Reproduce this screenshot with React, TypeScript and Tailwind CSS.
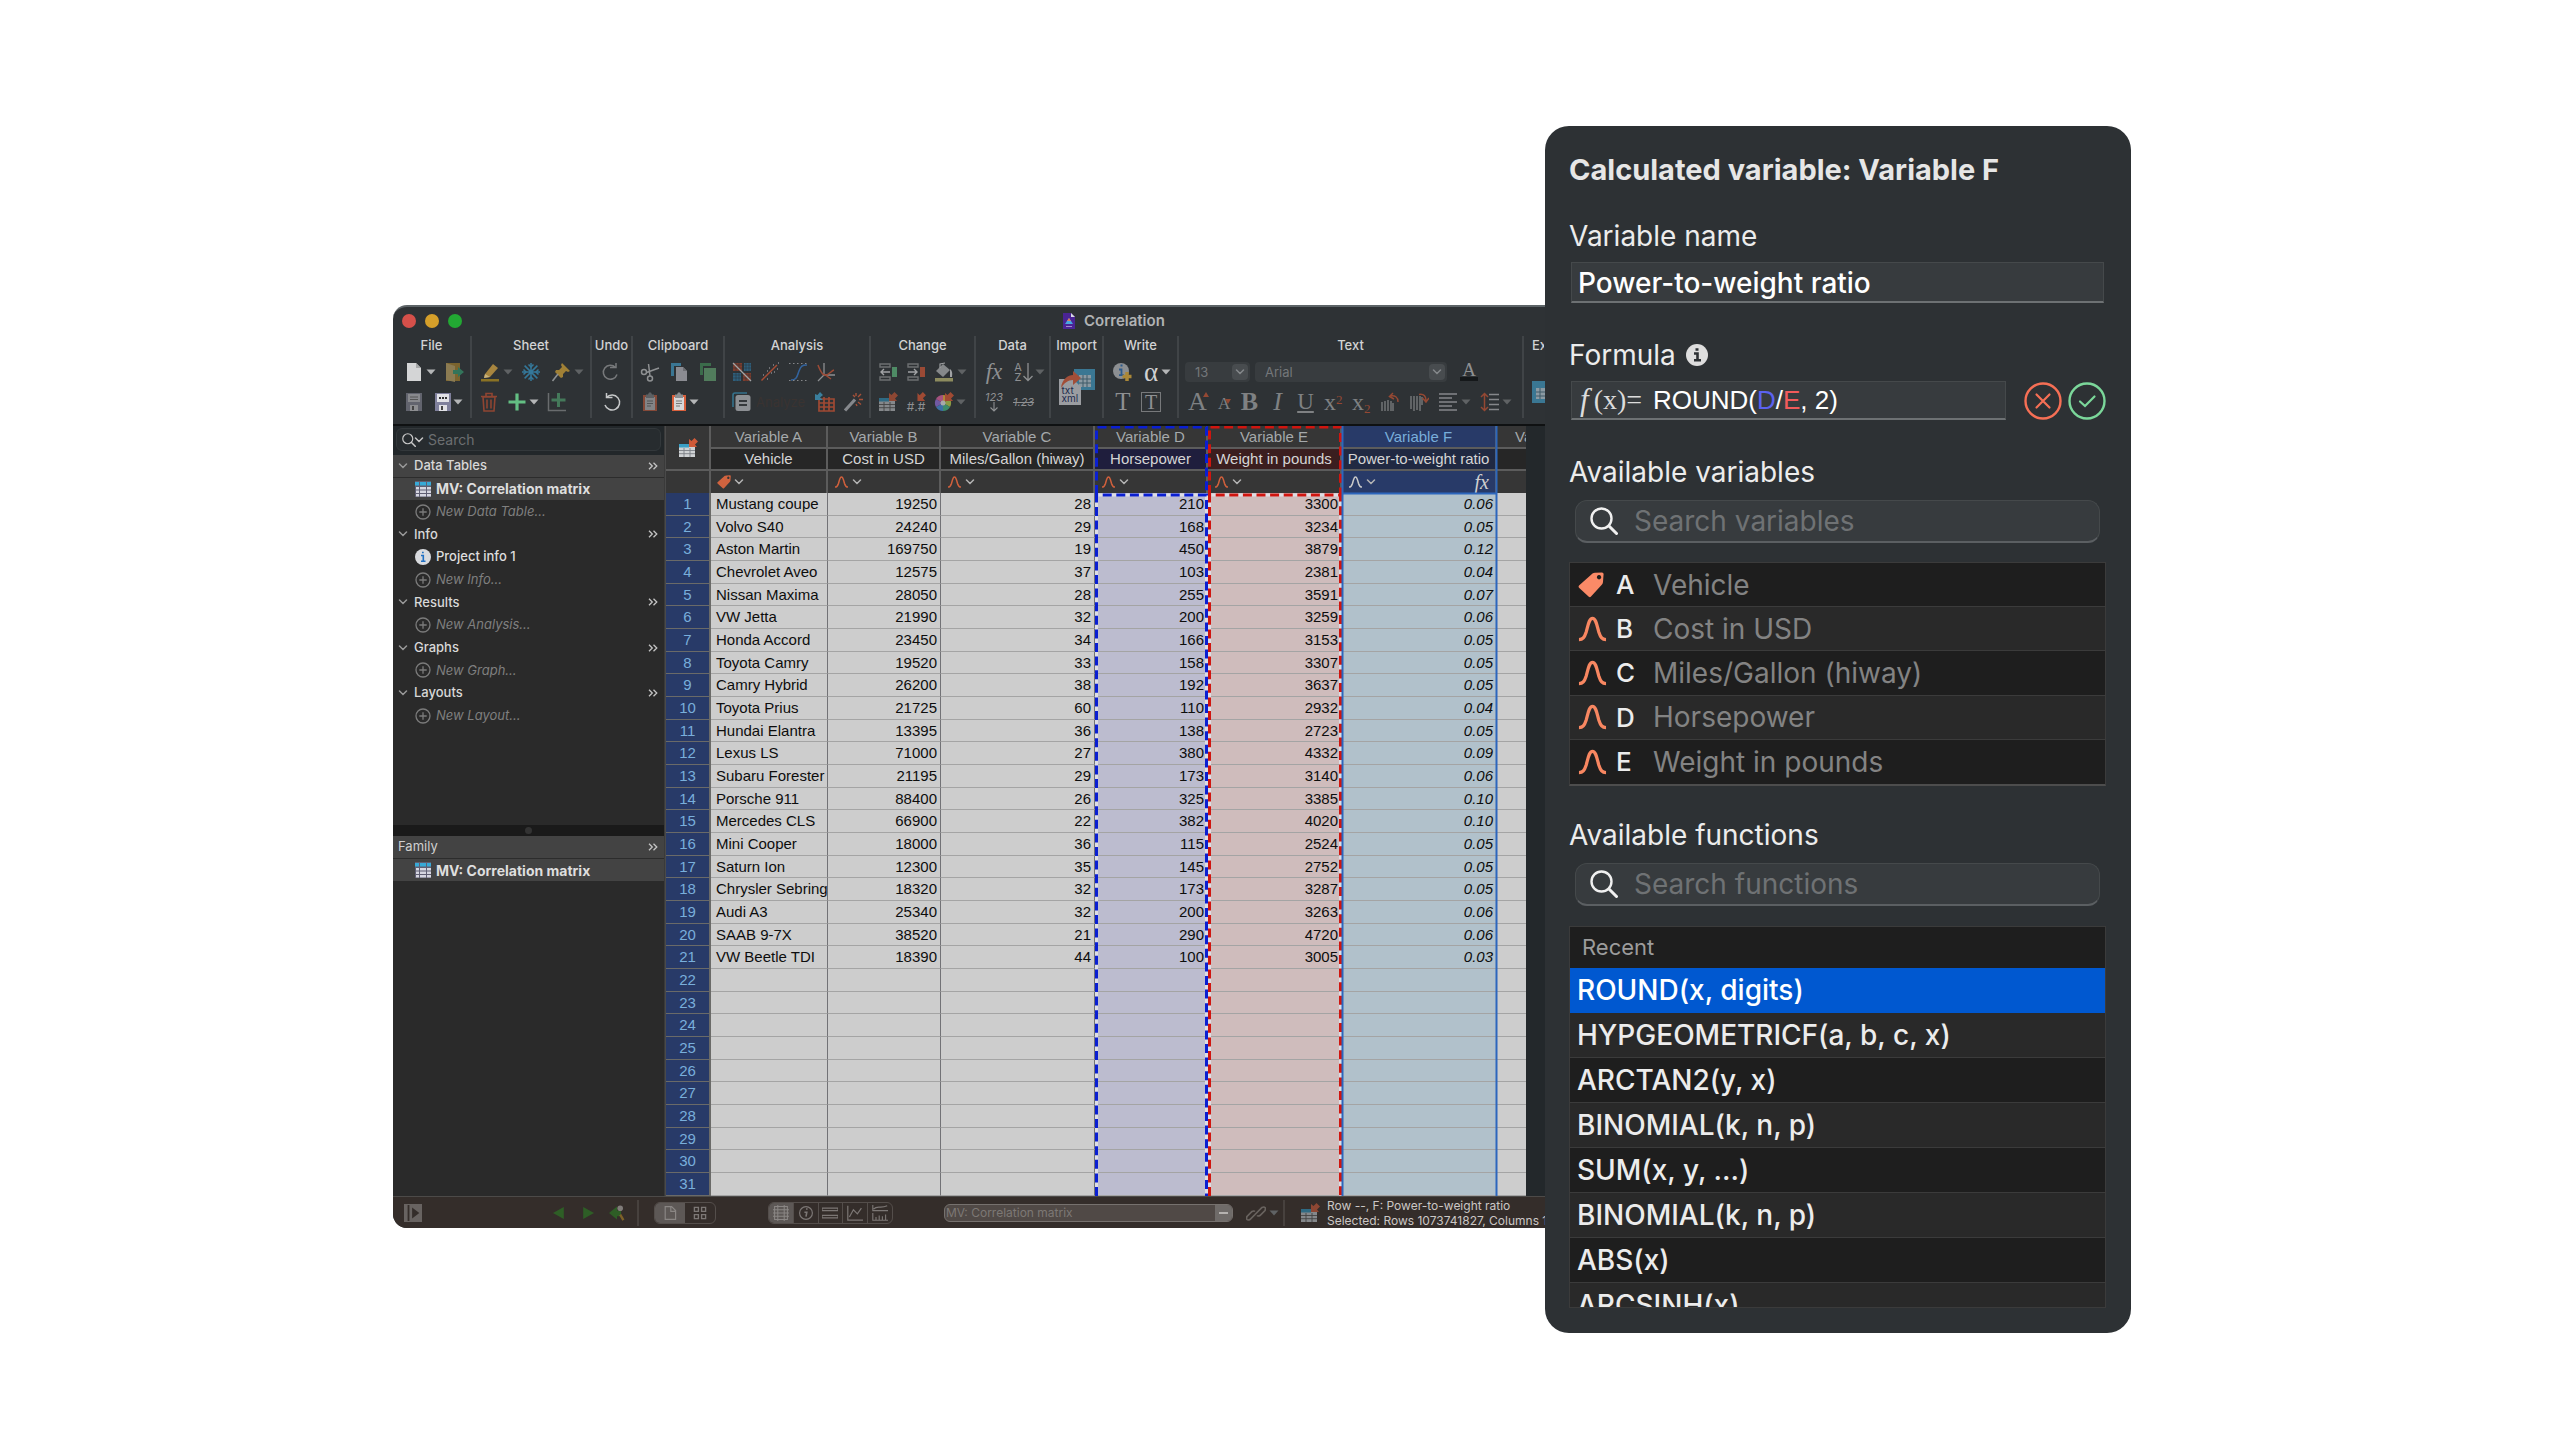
import type { ReactNode } from "react";

type Row = [string, number, number, number, number, string];

const rows: Row[] = [
  ["Mustang coupe", 19250, 28, 210, 3300, "0.06"],
  ["Volvo S40", 24240, 29, 168, 3234, "0.05"],
  ["Aston Martin", 169750, 19, 450, 3879, "0.12"],
  ["Chevrolet Aveo", 12575, 37, 103, 2381, "0.04"],
  ["Nissan Maxima", 28050, 28, 255, 3591, "0.07"],
  ["VW Jetta", 21990, 32, 200, 3259, "0.06"],
  ["Honda Accord", 23450, 34, 166, 3153, "0.05"],
  ["Toyota Camry", 19520, 33, 158, 3307, "0.05"],
  ["Camry Hybrid", 26200, 38, 192, 3637, "0.05"],
  ["Toyota Prius", 21725, 60, 110, 2932, "0.04"],
  ["Hundai Elantra", 13395, 36, 138, 2723, "0.05"],
  ["Lexus LS", 71000, 27, 380, 4332, "0.09"],
  ["Subaru Forester", 21195, 29, 173, 3140, "0.06"],
  ["Porsche 911", 88400, 26, 325, 3385, "0.10"],
  ["Mercedes CLS", 66900, 22, 382, 4020, "0.10"],
  ["Mini Cooper", 18000, 36, 115, 2524, "0.05"],
  ["Saturn Ion", 12300, 35, 145, 2752, "0.05"],
  ["Chrysler Sebring", 18320, 32, 173, 3287, "0.05"],
  ["Audi A3", 25340, 32, 200, 3263, "0.06"],
  ["SAAB 9-7X", 38520, 21, 290, 4720, "0.06"],
  ["VW Beetle TDI", 18390, 44, 100, 3005, "0.03"],
];

const rowNumbers = Array.from({ length: 31 }, (_, i) => i + 1);

const columns = [
  { id: "Variable A", name: "Vehicle", head: "bg-[#363636] text-[#a5a9ab]", title: "bg-[#262626]", body: "bg-[#cdcdcd]" },
  { id: "Variable B", name: "Cost in USD", head: "bg-[#363636] text-[#a5a9ab]", title: "bg-[#262626]", body: "bg-[#cdcdcd]" },
  { id: "Variable C", name: "Miles/Gallon (hiway)", head: "bg-[#363636] text-[#a5a9ab]", title: "bg-[#262626]", body: "bg-[#cdcdcd]" },
  { id: "Variable D", name: "Horsepower", head: "bg-[#363636] text-[#a5a9ab]", title: "bg-[#1f1e3d]", body: "bg-[#bcbccf]" },
  { id: "Variable E", name: "Weight in pounds", head: "bg-[#363636] text-[#a5a9ab]", title: "bg-[#3b1e1f]", body: "bg-[#cfbcbc]" },
  { id: "Variable F", name: "Power-to-weight ratio", head: "bg-[#283a68] text-[#79aedb]", title: "bg-[#202942]", body: "bg-[#b1c1cb]" },
];

/* ---------- small drawings ---------- */

function Icon({ children, className = "size-5" }: { children: ReactNode; className?: string }) {
  return (
    <svg className={`shrink-0 ${className}`} viewBox="0 0 20 20" fill="none" aria-hidden="true">
      {children}
    </svg>
  );
}

function Caret({ dim }: { dim?: boolean }) {
  return (
    <svg className="w-[10px] h-[6px] shrink-0" viewBox="0 0 10 6" aria-hidden="true">
      <path d="M0.5 0.5h9L5 5.5z" fill={dim ? "#5f6264" : "#b4b6b7"} />
    </svg>
  );
}

function Chevron({ className = "text-[#b0b0b0]" }: { className?: string }) {
  return (
    <svg className={`w-[10px] h-[6px] shrink-0 ${className}`} viewBox="0 0 10 6" fill="none" aria-hidden="true">
      <path d="M1.5 1L5 4.5 8.5 1" stroke="currentColor" strokeWidth="1.5" strokeLinecap="round" />
    </svg>
  );
}

function More() {
  return (
    <svg className="w-[10px] h-2 shrink-0" viewBox="0 0 10 8" fill="none" stroke="#c4c4c4" strokeWidth="1.300" aria-hidden="true">
      <path d="M1 0.700L4.300 4 1 7.300M5.500 0.700L8.800 4 5.500 7.300" />
    </svg>
  );
}

function Curve({ className }: { className: string }) {
  return (
    <svg className={`shrink-0 ${className}`} viewBox="0 0 30 26" fill="none" aria-hidden="true">
      <path
        d="M1 24c4 0 5.500-2 7.500-8C10.500 9 11.500 2 15 2s4.500 7 6.500 14c2 6 3.500 8 7.500 8"
        stroke="currentColor"
        strokeWidth="3.400"
      />
    </svg>
  );
}

function Tag({ className }: { className: string }) {
  return (
    <svg className={`shrink-0 ${className}`} viewBox="0 0 26 26" aria-hidden="true">
      <path
        d="M14.500 1.500Q15.500 0.800 17 0.700L24 0.500q1.500 0 1.600 1.500L25 10q-0.200 1.500-1 2.500L13 24.500q-1 1.200-2.200 0.200L1 15.800q-1-1 0-2.200zM21 3a2.200 2.200 0 1 0 0.100 0z"
        fill="currentColor"
        fillRule="evenodd"
      />
    </svg>
  );
}

function TableIcon({ className = "size-4" }: { className?: string }) {
  return (
    <svg className={`shrink-0 ${className}`} viewBox="0 0 16 16" aria-hidden="true">
      <path d="M0 0h16v16H0z" fill="#5f5e72" />
      <path d="M0 1h4v3.500H0zM5 1h6v3.500H5zM12 1h4v3.500h-4z" fill="#37a9d6" />
      <path d="M1 6h3v2.500H1zM5 6h6v2.500H5zM12 6h4v2.500h-4zM1 9.500h3V12H1zM5 9.500h6V12H5zM12 9.500h4V12h-4zM1 13h3v2.500H1zM5 13h6v2.500H5zM12 13h4v2.500h-4z" fill="#d6d6e0" />
    </svg>
  );
}

// Table with an orange arrow pointing into its corner
function TableArrow({ className = "size-5", dim }: { className?: string; dim?: boolean }) {
  return (
    <Icon className={className}>
      <path d="M1 6h16v13H1z" fill={dim ? "#85888b" : "#cfd2d4"} />
      <path d="M1 6h10v3.500H1z" fill={dim ? "#2f6a83" : "#3b9fc4"} />
      <path d="M1 12.500h16M1 15.700h16M6 10v9M12 10v9" stroke={dim ? "#444" : "#7c7f86"} strokeWidth="0.900" />
      <path d="M11 1l2.500 2L16.500 0 20 3.500 17 6.500 19 9h-8z" fill={dim ? "#8d4733" : "#d05a38"} />
    </Icon>
  );
}

function PlusCircle() {
  return (
    <svg className="size-4 shrink-0" viewBox="0 0 16 16" fill="none" stroke="#7b7b7b" aria-hidden="true">
      <circle cx="8" cy="8" r="7" strokeWidth="1.300" />
      <path d="M8 4.300v7.400M4.300 8h7.400" strokeWidth="1.300" />
    </svg>
  );
}

function Magnifier({ className }: { className: string }) {
  return (
    <svg className={`shrink-0 ${className}`} viewBox="0 0 28 28" fill="none" stroke="currentColor" aria-hidden="true">
      <circle cx="11.500" cy="11.500" r="10" strokeWidth="2.400" />
      <path d="M19 19l7.500 7.500" strokeWidth="3" strokeLinecap="round" />
    </svg>
  );
}

/* ---------- toolbar ---------- */

function Tool({ label, children }: { label: string; children: ReactNode }) {
  return (
    <button type="button" aria-label={label} className="flex items-center shrink-0">
      {children}
    </button>
  );
}

function Group({ title, className, children }: { title: string; className: string; children: ReactNode }) {
  return (
    <section className={`shrink-0 h-[82px] border-r-2 border-[#404447] ${className}`}>
      <h2 className="mb-2 text-[13px] leading-[18px] font-medium text-center text-[#d2d3d4]">{title}</h2>
      {children}
    </section>
  );
}

function ToolRow({ className = "", children }: { className?: string; children: ReactNode }) {
  return <div className={`flex items-center h-5 mb-[10px] ${className}`}>{children}</div>;
}

function Clip({ dim }: { dim?: boolean }) {
  return (
    <Icon>
      <g opacity={dim ? 0.5 : 1}>
        <path d="M3 3h14v16H3z" fill="#d9603c" />
        <path d="M5 5h10v13H5z" fill="#d5d6d8" />
        <path d="M6 4V2.500h2L9 0.500h2l1 2h2V6H6z" fill="#8b8e91" />
        <path d="M7 9h6M7 11.500h6M7 14h4" stroke="#777" />
      </g>
    </Icon>
  );
}

function Toolbar() {
  return (
    <div className="flex mt-[7px] h-[90px] border-b-2 border-[#0f1112] overflow-hidden">
      <Group title="File" className="w-[79px]">
        <ToolRow className="pl-[11px]">
          <Tool label="New">
            <Icon><path d="M3 1h9l5 5v13H3z" fill="#d4d5d6" /><path d="M12 1v5h5" fill="#a5a7a8" /></Icon>
            <span className="w-[2px]" />
            <Caret />
          </Tool>
          <span className="w-2" />
          <Tool label="Open">
            <Icon>
              <path d="M2 1h14v18H2z" fill="#7b642e" />
              <path d="M2 1l9 3v16l-9-2z" fill="#8b7b52" />
              <path d="M9 8h5V5l6 5-6 5v-3H9z" fill="#33745a" />
            </Icon>
          </Tool>
        </ToolRow>
        <ToolRow className="pl-[11px]">
          <Tool label="Save">
            <Icon><path d="M2 1h16v18H2z" fill="#62646e" /><path d="M4 2h12v8H4z" fill="#88898d" /><path d="M6 5h8M6 7.500h8" stroke="#555" /><path d="M6 13h8v6H6z" fill="#8d8e91" /><path d="M8 14h2v4H8z" fill="#444" /></Icon>
          </Tool>
          <span className="w-[9px]" />
          <Tool label="Save as">
            <Icon><path d="M2 1h16v18H2z" fill="#7f809c" /><path d="M4 2h12v8H4z" fill="#e1e1e6" /><path d="M6 6h2M9 6h2M12 6h2" stroke="#333" strokeWidth="2" /><path d="M6 13h8v6H6z" fill="#e1e1e6" /><path d="M8 14h2v4H8z" fill="#444" /></Icon>
            <Caret />
          </Tool>
        </ToolRow>
      </Group>

      <Group title="Sheet" className="w-[120px]">
        <ToolRow className="pl-2">
          <Tool label="Highlight">
            <Icon><path d="M5 12L13 2l5 4-8 9-6 1z" fill="#a7853f" /><path d="M5 12l5 3-6 1z" fill="#c9b27a" /><path d="M1 17h18v2.500H1z" fill="#8a7224" /></Icon>
            <span className="w-[3px]" />
            <Caret dim />
          </Tool>
          <span className="w-2" />
          <Tool label="Freeze">
            <Icon>
              <g stroke="#34789a" strokeWidth="1.500">
                <path d="M10 1v18M1 10h18M3.600 3.600l12.800 12.800M16.400 3.600L3.600 16.400" />
                <path d="M7.500 2.500L10 5l2.500-2.500M7.500 17.500L10 15l2.500 2.500M2.500 7.500L5 10l-2.500 2.500M17.500 7.500L15 10l2.500 2.500" />
              </g>
            </Icon>
          </Tool>
          <span className="w-[10px]" />
          <Tool label="Pin">
            <Icon><path d="M11 1l8 8-2 1-2-1-3 3v3l-2 1-6-6 1-2h3l3-3-1-2z" fill="#a08035" /><path d="M7 12l-5.500 7" stroke="#8d9092" strokeWidth="1.600" /></Icon>
            <span className="w-[3px]" />
            <Caret dim />
          </Tool>
        </ToolRow>
        <ToolRow className="pl-[7px]">
          <Tool label="Delete">
            <Icon><path d="M4 5h12l-1 14H5zM2 4.500h16M7 4V1.500h6V4M8 7.500v9M12 7.500v9" stroke="#8f4532" strokeWidth="1.600" /></Icon>
          </Tool>
          <span className="w-2" />
          <Tool label="Add">
            <Icon><path d="M10 1.500v17M1.500 10h17" stroke="#63bf83" strokeWidth="3.200" /></Icon>
            <span className="w-[2px]" />
            <Caret />
          </Tool>
          <span className="w-2" />
          <Tool label="Add graph">
            <Icon><path d="M1.500 1v17.500H19" stroke="#696c6e" strokeWidth="1.500" /><path d="M11.500 1v14M4.500 8h14" stroke="#44795a" strokeWidth="3" /></Icon>
          </Tool>
        </ToolRow>
      </Group>

      <Group title="Undo" className="w-[41px]">
        <ToolRow className="justify-center pr-1">
          <Tool label="Redo">
            <Icon><path d="M15.500 5.500A7 7 0 1 0 17 12.500M10 5.500h6V1" stroke="#77797b" strokeWidth="1.500" /></Icon>
          </Tool>
        </ToolRow>
        <ToolRow className="justify-center">
          <Tool label="Undo">
            <Icon><path d="M4.500 5.500A7.500 7.500 0 1 1 3 13M10.500 5.500h-6V1" stroke="#c6c8c9" strokeWidth="1.500" /></Icon>
          </Tool>
        </ToolRow>
      </Group>

      <Group title="Clipboard" className="w-[92px]">
        <ToolRow className="pl-[7px] gap-[9px]">
          <Tool label="Cut">
            <Icon>
              <g stroke="#8e9092" strokeWidth="1.500"><circle cx="4" cy="10" r="2.500" /><circle cx="10" cy="16.500" r="2.500" /><path d="M6.500 10.500L19 6M10 14L8.500 2" /></g>
            </Icon>
          </Tool>
          <Tool label="Copy">
            <Icon><path d="M2 1h10v3H5v10H2z" fill="#3a7693" /><path d="M7 5h7l4 4v10H7z" fill="#8b8c92" /><path d="M14 5v4h4" fill="#6d6e73" /></Icon>
          </Tool>
          <Tool label="Duplicate">
            <Icon><path d="M2 1h11v3H5v9H2z" fill="#3b6c4b" /><path d="M6 6h12v13H6z" fill="#517c5c" /></Icon>
          </Tool>
        </ToolRow>
        <ToolRow className="pl-[7px] gap-[9px]">
          <Tool label="Paste"><Clip dim /></Tool>
          <Tool label="Paste special">
            <Clip />
            <Caret />
          </Tool>
        </ToolRow>
      </Group>

      <Group title="Analysis" className="w-[146px]">
        <ToolRow className="pl-[7px] gap-2">
          <Tool label="Correlation matrix">
            <Icon>
              <path d="M1 1h9v8H1zM11 11h8v8h-8z" fill="#7e3d2d" />
              <path d="M12 1h7v8h-7zM1 11h8v8H1z" fill="#2e5f7c" />
              <path d="M1 3h18M1 6h18M1 13h18M1 16h18M4 1v18M7 1v18M14 1v18M17 1v18" stroke="#2e3235" strokeWidth="0.500" />
              <path d="M1 1l18 18" stroke="#a3a4a5" strokeWidth="1.300" />
            </Icon>
          </Tool>
          <Tool label="Linear regression">
            <Icon><path d="M1.500 18.500L17 3" stroke="#a84c35" strokeWidth="1.500" /><path d="M3 13h1M7 9h1M11 11h1M13 3h1M17 7h1M18 1h1M7 17h1M14 10h1M9 6h1" stroke="#85878a" strokeWidth="1.300" /></Icon>
          </Tool>
          <Tool label="Nonlinear regression">
            <Icon><path d="M3 18c6 0 6-4 8-9s3-6 8-6" stroke="#33639c" strokeWidth="1.600" /><path d="M1 1.500h18M1 18.500h18" stroke="#85878a" strokeWidth="1.200" strokeDasharray="1.500 2.500" /></Icon>
          </Tool>
          <Tool label="Fit">
            <Icon><path d="M8 1v12l-6 6M8 13h11" stroke="#8d8f91" strokeWidth="1.300" /><path d="M2 3c2 5 3 8 6 10s7-4 10-5M8 12l7 5" stroke="#9c4a35" strokeWidth="1.500" /></Icon>
          </Tool>
        </ToolRow>
        <ToolRow className="pl-[7px] gap-2">
          <Tool label="Analyze">
            <Icon><path d="M1 15V3q0-2 2-2h12" stroke="#35728c" strokeWidth="1.600" /><rect x="3.500" y="3" width="15" height="16" rx="2.500" fill="#8d9094" /><path d="M7 9h8M7 13h8" stroke="#35383b" strokeWidth="1.800" /></Icon>
            <span className="pl-1 w-[55px] text-[13px] leading-4 text-left text-[#3a3331]">Analyze</span>
          </Tool>
          <Tool label="Table to graph">
            <Icon><path d="M4 7h15v12H4zM4 11h15M4 15h15M9 5v14M14 5v14" stroke="#a04a33" strokeWidth="1.700" /><path d="M0 2l2.500 1L5 0l3 3-3 2.500L8 8H0z" fill="#3a7f9d" /></Icon>
          </Tool>
          <Tool label="Wizard">
            <Icon><path d="M2 18.500L12 7.500" stroke="#85888c" strokeWidth="3.200" /><path d="M13 1v3M10 3l2 2M18 2l-3 3M16 7.500h4M15 10l3 2.500M13 12l1 2" stroke="#a65138" strokeWidth="1.400" /></Icon>
          </Tool>
        </ToolRow>
      </Group>

      <Group title="Change" className="w-[105px]">
        <ToolRow className="pl-[7px] gap-2">
          <Tool label="Insert">
            <Icon><path d="M2 2h10v3H2zM2 15h10v3H2z" stroke="#6d7072" strokeWidth="1.400" /><path d="M3 10h9M6 7l-3 3 3 3" stroke="#a1a3a5" strokeWidth="1.400" /><path d="M14 5h5v10h-5z" fill="#4e8b65" /></Icon>
          </Tool>
          <Tool label="Remove">
            <Icon><path d="M2 2h10v3H2zM2 15h10v3H2z" stroke="#6d7072" strokeWidth="1.400" /><path d="M2 10h9M8 7l3 3-3 3" stroke="#a1a3a5" strokeWidth="1.400" /><path d="M14 5h5v10h-5z" fill="#9b4a35" /></Icon>
          </Tool>
          <Tool label="Fill">
            <Icon><path d="M2 9l7-7 7 6-7 7z" fill="#85888a" /><path d="M6 6V2l5-1" stroke="#9c9ea0" strokeWidth="1.200" /><path d="M16 7q3 2 2 8h-2z" fill="#a1a3a5" /><path d="M1 16h18v3.500H1z" fill="#8d8c5f" /></Icon>
            <span className="w-[3px]" />
            <Caret dim />
          </Tool>
        </ToolRow>
        <ToolRow className="pl-[7px] gap-2">
          <Tool label="Change table"><TableArrow dim /></Tool>
          <Tool label="Number format">
            <span className="relative w-5 h-5 text-[12px] leading-[10px] text-[#8e9092] pt-[10px]">
              #.#
              <Icon className="absolute right-0 top-0 size-[9px]"><path d="M1 2l5 5 7-7 7 7-7 7 5 6H1z" fill="#a04a33" /></Icon>
            </span>
          </Tool>
          <Tool label="Color scheme">
            <Icon>
              <path d="M9 11V3a8 8 0 0 1 7 4z" fill="#b0863a" /><path d="M9 11l7-4a8 8 0 0 1 0 8z" fill="#8b9b45" /><path d="M9 11l7 4a8 8 0 0 1-7 4z" fill="#3d8b6b" />
              <path d="M9 11v8a8 8 0 0 1-7-4z" fill="#3c6fa5" /><path d="M9 11l-7 4a8 8 0 0 1 0-8z" fill="#7059a3" /><path d="M9 11L2 7a8 8 0 0 1 7-4z" fill="#a5527e" />
              <circle cx="9" cy="11" r="2.500" fill="#a7a9ab" /><path d="M11 1l2.500 2L16.500 0 20 3.500 17 6.500 19 9h-8z" fill="#a04a33" />
            </Icon>
            <span className="w-[2px]" />
            <Caret dim />
          </Tool>
        </ToolRow>
      </Group>

      <Group title="Data" className="w-[75px]">
        <ToolRow className="pl-2 gap-[9px]">
          <Tool label="Function"><span className="w-5 font-['Liberation_Serif',serif] italic text-[23px] leading-5 text-[#8e9092]">fx</span></Tool>
          <Tool label="Sort">
            <span className="w-[10px] text-[11px] leading-[10px] text-[#8e9092]">A<br />Z</span>
            <Icon className="w-[10px] h-5"><path d="M10 -8v34M1 18l9 9 9-9" stroke="#8e9092" strokeWidth="2.600" /></Icon>
            <span className="w-[2px]" />
            <Caret dim />
          </Tool>
        </ToolRow>
        <ToolRow className="pl-2 gap-[9px]">
          <Tool label="Number rows">
            <span className="w-5 text-[11px] leading-[9px] italic text-[#8e9092]">
              123
              <Icon className="w-5 h-[10px]"><path d="M10 0v18M3 11l7 7 7-7" stroke="#8e9092" strokeWidth="2.200" /></Icon>
            </span>
          </Tool>
          <Tool label="Exclude"><span className="w-5 text-[11px] leading-4 italic line-through text-[#8e9092]">1.23</span></Tool>
        </ToolRow>
      </Group>

      <Group title="Import" className="w-[53px]">
        <div className="flex justify-center pt-[6px]">
          <button type="button" aria-label="Import text or XML" className="relative w-9 h-[38px]">
            <svg className="absolute inset-0" viewBox="0 0 36 38" fill="none" aria-hidden="true">
              <path d="M15 1h21v21H15z" fill="#3a7793" />
              <path d="M20 7h12v12H20z" fill="#8b9aa3" /><path d="M20 11h12M20 15h12M24 7v12M28 7v12" stroke="#3f5a68" />
              <path d="M0 11h14l8 8v18H0z" fill="#9b9da1" />
              <path d="M2 20c1-9 7-13 12-13V3l8 7-8 7v-5c-5 0-9 3-12 8z" fill="#a24e38" />
            </svg>
            <span className="absolute left-[3px] top-[18px] text-[10px] leading-[8px] text-left text-[#1d2a4d]">txt<br />xml</span>
          </button>
        </div>
      </Group>

      <Group title="Write" className="w-[75px]">
        <ToolRow className="pl-2 gap-[9px]">
          <Tool label="Add info">
            <Icon><circle cx="9" cy="9" r="8" fill="#8c8f92" /><path d="M7 7.500h2.500V13M7 13.200h5M8.500 3.500h2" stroke="#2c5b8d" strokeWidth="1.800" /><path d="M15 10v9M10.500 14.500h9" stroke="#ab8838" strokeWidth="3.500" /></Icon>
          </Tool>
          <Tool label="Symbol">
            <span className="w-5 text-[27px] leading-5 font-['Liberation_Serif',serif] text-[#d0d1d2]">α</span>
            <Caret />
          </Tool>
        </ToolRow>
        <ToolRow className="pl-[9px] gap-2">
          <Tool label="Text"><span className="w-5 font-['Liberation_Serif',serif] text-[25px] leading-5 text-[#8e9092]">T</span></Tool>
          <Tool label="Text box"><span className="w-5 h-5 border border-[#77797b] font-['Liberation_Serif',serif] text-[20px] leading-[18px] text-center text-[#8e9092]">T</span></Tool>
        </ToolRow>
      </Group>

      <Group title="Text" className="w-[345px]">
        <ToolRow className="pl-[6px] gap-[5px]">
          <DimSelect label="Font size" value="13" className="w-[65px]" />
          <DimSelect label="Font" value="Arial" className="w-[192px]" />
          <span className="w-[3px]" />
          <Tool label="Text color">
            <span className="w-[18px] h-[18px] border-b-4 border-[#15181a] font-['Liberation_Serif',serif] text-[19px] leading-[13px] text-center text-[#8e9092]">A</span>
          </Tool>
        </ToolRow>
        <ToolRow className="pl-[9px] gap-[9px] font-['Liberation_Serif',serif] text-[#7f8183]">
          <Tool label="Larger"><span className="w-[19px] text-[26px] leading-5">A</span><Tri up /></Tool>
          <Tool label="Smaller"><span className="w-[11px] text-[17px] leading-5 pt-1">A</span><Tri /></Tool>
          <Tool label="Bold"><span className="w-[19px] text-[26px] leading-5 font-bold text-center">B</span></Tool>
          <Tool label="Italic"><span className="w-[19px] text-[26px] leading-5 italic text-center">I</span></Tool>
          <Tool label="Underline"><span className="w-[19px] text-[23px] leading-5 underline text-center">U</span></Tool>
          <Tool label="Superscript"><span className="w-[19px] text-[24px] leading-5 text-left">x<sup className="text-[13px] text-[#944833]">2</sup></span></Tool>
          <Tool label="Subscript"><span className="w-[19px] text-[24px] leading-5 text-left">x<sub className="text-[13px] text-[#944833]">2</sub></span></Tool>
          <Tool label="Rotate left"><Icon><path d="M2 10v9M5 9v10M8 8v11M11 9v10M13 11v8" stroke="#77797b" strokeWidth="1.400" /><path d="M18 10c0-5-3-7-8-6M13 1L9.500 4.500 14 7" stroke="#944833" strokeWidth="1.500" /></Icon></Tool>
          <Tool label="Rotate right"><Icon><path d="M2 4v13M5 4v15M8 4v14M11 4v15M13 5v8" stroke="#77797b" strokeWidth="1.400" /><path d="M10 2.500c5-1 7 2 7 6M13.500 6l3.500 4 3-4" stroke="#944833" strokeWidth="1.500" /></Icon></Tool>
          <Tool label="Align">
            <Icon><path d="M1 2h18M1 6h13M1 10h18M1 14h13M1 18h18" stroke="#85878a" strokeWidth="1.500" /></Icon>
            <span className="w-[3px]" /><Caret dim />
          </Tool>
          <Tool label="Line spacing">
            <Icon><path d="M9 2.500h10M9 7.500h10M9 12.500h10M9 17.500h10" stroke="#85878a" strokeWidth="1.500" /><path d="M4.500 2v16M1 5l3.500-3.500L8 5M1 15l3.500 3.500L8 15" stroke="#944833" strokeWidth="1.500" /></Icon>
            <span className="w-[2px]" /><Caret dim />
          </Tool>
        </ToolRow>
      </Group>

      <section className="flex-1 overflow-hidden pl-2">
        <h2 className="text-[13px] leading-[18px] font-medium text-[#d2d3d4] w-[12px] overflow-hidden">Export</h2>
        <svg className="w-[22px] h-[22px] mt-[27px]" viewBox="0 0 22 22" aria-hidden="true">
          <path d="M0 0h22v22H0z" fill="#3a7793" /><path d="M4 7h12v11H4z" fill="#8b9aa3" /><path d="M4 11h12M4 15h12M8 7v11" stroke="#3f5a68" />
        </svg>
      </section>
    </div>
  );
}

function Tri({ up }: { up?: boolean }) {
  return (
    <svg className="w-[6px] h-5 -ml-1" viewBox="0 0 6 20" aria-hidden="true">
      <path d={up ? "M0 5h6L3 0z" : "M0 7h6l-3 5z"} fill="#944833" />
    </svg>
  );
}

function DimSelect({ label, value, className }: { label: string; value: string; className: string }) {
  return (
    <div className={`relative h-5 rounded bg-[#383c3f] ${className}`}>
      <select aria-label={label} className="appearance-none block w-full h-5 pl-[10px] text-[13px] leading-5 text-[#74777a]">
        <option>{value}</option>
      </select>
      <span className="absolute right-[2px] top-[2px] flex items-center justify-center size-4 rounded-sm bg-[#484c4f] pointer-events-none">
        <Chevron className="text-[#85888b]" />
      </span>
    </div>
  );
}

/* ---------- sidebar ---------- */

function SectionRow({ title, filled }: { title: string; filled?: boolean }) {
  return (
    <li className={`flex items-center pl-[5px] pr-[6px] text-[#d8d8d8] ${filled ? "bg-[#434343] border-b border-[#2c2c2c]" : ""}`}>
      <Chevron className="text-[#999]" />
      <span className="pl-[6px] flex-1 font-medium">{title}</span>
      <More />
    </li>
  );
}

function NewRow({ title }: { title: string }) {
  return (
    <li className="flex items-center pl-[22px] gap-[5px] italic text-[#7f7f7f]">
      <PlusCircle />
      <a href="#">{title}</a>
    </li>
  );
}

function Sidebar() {
  return (
    <aside className="w-[272px] shrink-0 flex flex-col bg-[#2a2a2a] text-[13px] border-r border-[#3a3a3a]">
      <div className="h-[29px] px-[3px] pt-[2px] bg-[#22272a]">
        <label className="flex items-center h-[23px] pl-[5px] rounded-md bg-[#272c2f] border border-[#33383b] text-[#c8c8c8]">
          <Magnifier className="size-[14px]" />
          <Chevron className="text-[#c8c8c8] -ml-[2px]" />
          <input aria-label="Search" placeholder="Search" className="ml-[4px] w-full text-[14px] outline-none placeholder:text-[#6c6f71]" />
        </label>
      </div>
      <ul className="grid grid-rows-12 h-[272px]">
        <SectionRow title="Data Tables" filled />
        <li className="flex items-center pl-[22px] gap-[5px] bg-[#434343] text-[14px] font-bold text-[#dedede]">
          <TableIcon />
          MV: Correlation matrix
        </li>
        <NewRow title="New Data Table..." />
        <SectionRow title="Info" />
        <li className="flex items-center pl-[22px] gap-[5px] font-medium text-[#dedede]">
          <svg className="size-4" viewBox="0 0 16 16" fill="none" aria-hidden="true">
            <circle cx="8" cy="8" r="8" fill="#d8dade" />
            <path d="M6 6.500h2.300V12M6 12.200h4.500M7 3.500h1.700" stroke="#1f6fc2" strokeWidth="1.600" />
          </svg>
          Project info 1
        </li>
        <NewRow title="New Info..." />
        <SectionRow title="Results" />
        <NewRow title="New Analysis..." />
        <SectionRow title="Graphs" />
        <NewRow title="New Graph..." />
        <SectionRow title="Layouts" />
        <NewRow title="New Layout..." />
      </ul>
      <div className="mt-[98px] h-[11px] bg-[#1a1a1a] flex items-center justify-center">
        <span className="size-[7px] rounded-full bg-[#333]" />
      </div>
      <div className="flex items-center h-[23px] pl-[5px] pr-[6px] bg-[#434343] border-b border-[#2c2c2c] text-[#d0d0d0]">
        <span className="flex-1">Family</span>
        <More />
      </div>
      <div className="flex items-center h-[22px] pl-[22px] gap-[5px] bg-[#434343] text-[14px] font-bold text-[#dedede]">
        <TableIcon />
        MV: Correlation matrix
      </div>
    </aside>
  );
}

/* ---------- data grid ---------- */

function DataGrid() {
  return (
    <div className="relative w-[860px] shrink-0 font-['Liberation_Sans',sans-serif] text-[15px] leading-[20px]">
      <table className="table-fixed border-separate border-spacing-0 w-[860px] h-[770px] whitespace-nowrap text-[#0d0d0d]">
        <colgroup>
          <col className="w-[45px]" />
          <col className="w-[117px]" />
          <col className="w-[113px]" />
          <col className="w-[154px]" />
          <col className="w-[113px]" />
          <col className="w-[134px]" />
          <col className="w-[155px]" />
          <col className="w-[29px]" />
        </colgroup>
        <thead>
          <tr className="h-[23px]">
            <th rowSpan={2} className="p-0 bg-[#363636] border-r-2 border-b-2 border-[#5c5c5c]">
              <TableArrow className="size-5 mx-auto" />
            </th>
            {columns.map((c) => (
              <th key={c.id} className={`p-0 font-normal border-r-2 border-b-2 border-[#5c5c5c] ${c.head}`}>{c.id}</th>
            ))}
            <th className="p-0 pl-[18px] font-normal text-left overflow-hidden bg-[#363636] text-[#a5a9ab] border-b-2 border-[#5c5c5c]">Variable G</th>
          </tr>
          <tr className="h-[22px]">
            {columns.map((c) => (
              <th key={c.id} className={`p-0 font-normal text-[#d5d5d5] border-r-2 border-b-2 border-[#5c5c5c] ${c.title}`}>{c.name}</th>
            ))}
            <th className="p-0 bg-[#262626] border-b-2 border-[#5c5c5c]" />
          </tr>
          <tr className="h-[22px]">
            <th className="p-0 bg-[#363636] border-r-2 border-[#5c5c5c]" />
            {columns.map((c, i) => (
              <th key={c.id} className={`p-0 border-r-2 border-[#5c5c5c] ${c.head}`}>
                <span className="flex items-center pl-[6px] pr-[6px] gap-[3px]">
                  {i === 0 ? (
                    <Tag className="size-[14px] text-[#d0633f]" />
                  ) : (
                    <Curve className={i === 5 ? "w-[15px] h-[12px] text-[#c9c9c9]" : "w-[15px] h-[12px] text-[#d0603c]"} />
                  )}
                  <Chevron className="text-[#b5b5b5]" />
                  {i === 5 && <em className="ml-auto h-[19px] font-['Liberation_Serif',serif] text-[20px] leading-[18px] font-normal text-[#cfcfcf]">fx</em>}
                </span>
              </th>
            ))}
            <th className="p-0 bg-[#363636]" />
          </tr>
        </thead>
        <tbody>
          {rowNumbers.map((n) => {
            const row = rows[n - 1];
            return (
              <tr key={n}>
                <th className="p-0 font-normal text-center bg-[#283a68] text-[#79aedb] border-r-2 border-b border-[#6a6a68]">{n}</th>
                {columns.map((c, i) => (
                  <td
                    key={c.id}
                    className={`py-0 border-b border-r border-b-[#a4a4a4] border-r-[#727276] ${i === 0 ? "pl-[5px] pr-0" : "pl-0 pr-[3px] text-right"} ${i === 5 ? "italic" : ""} ${c.body}`}
                  >
                    {row?.[i]}
                  </td>
                ))}
                <td className="p-0 bg-[#cdcdcd] border-b border-[#a4a4a4]" />
              </tr>
            );
          })}
        </tbody>
      </table>

      {/* Marching ants round the formula's columns, solid frame round the result column */}
      <svg className="absolute inset-0 pointer-events-none" width="860" height="770" viewBox="0 0 860 770" fill="none" aria-hidden="true">
        <path d="M430.500 770V69h110v701M543.500 770V69h131v701" stroke="#dedee4" strokeWidth="3" />
        <g strokeWidth="3" strokeDasharray="9 4.600">
          <path d="M430.500 68V1h110v67M430.500 770V69h110v701" stroke="#0a1fd2" />
          <path d="M543.500 68V1h131v67M543.500 770V69h131v701" stroke="#d0150f" />
        </g>
        <path d="M676.500 0v770M830.500 0v770M676 67.500h155" stroke="#2c66bd" strokeWidth="2" />
      </svg>
    </div>
  );
}

/* ---------- status bar ---------- */

function Segment({ label, active, className, children }: { label: string; active?: boolean; className: string; children: ReactNode }) {
  return (
    <button type="button" aria-label={label} className={`flex items-center justify-center h-5 ${className} ${active ? "bg-[#5d5856]" : ""}`}>
      <Icon className="size-4">{children}</Icon>
    </button>
  );
}

function StatusBar() {
  return (
    <footer className="flex items-center h-[32px] shrink-0 border-t border-[#4c4a48] bg-[#342d2a] overflow-hidden whitespace-nowrap *:shrink-0">
      <button type="button" aria-label="Toggle sidebar" className="ml-[11px]">
        <Icon className="size-[18px]"><path d="M0 0h20v20H0z" fill="#686361" /><path d="M5 1v18" stroke="#342d2a" strokeWidth="2" /><path d="M9 4l8 6-8 6z" fill="#342d2a" /></Icon>
      </button>
      <button type="button" aria-label="Previous" className="ml-[131px]"><Icon className="w-[12px] h-4"><path d="M18 0v20L0 10z" fill="#2e5e26" /></Icon></button>
      <button type="button" aria-label="Next" className="ml-[17px]"><Icon className="w-[12px] h-4"><path d="M2 0v20l18-10z" fill="#2e5e26" /></Icon></button>
      <button type="button" aria-label="Find" className="ml-[15px]">
        <Icon className="size-4"><path d="M0 10l10-8v5h5v7h-5v4z" fill="#2e5e26" /><circle cx="14" cy="4" r="3.500" fill="#807c7a" /><path d="M14 12l4 7" stroke="#7d6128" strokeWidth="3" /></Icon>
      </button>
      <span className="ml-[12px] w-[2px] h-[26px] bg-[#47413e]" />
      <div className="ml-[15px] flex w-[62px] rounded-md border border-[#544e4b] overflow-hidden">
        <Segment label="Sheet view" active className="flex-1"><path d="M4 2h8l5 5v11H4zM11 2v6h6" stroke="#8a8684" strokeWidth="1.500" /></Segment>
        <Segment label="Gallery view" className="flex-1"><path d="M3 3h5v5H3zM12 3h5v5h-5zM3 12h5v5H3zM12 12h5v5h-5z" stroke="#7c7775" strokeWidth="1.700" /></Segment>
      </div>
      <div className="ml-[52px] flex w-[125px] rounded-md border border-[#544e4b] overflow-hidden divide-x divide-[#544e4b]">
        <Segment label="Data" active className="flex-1"><path d="M2 2h16v16H2zM6 0v20M14 0v20M0 6h20M0 10h20M0 14h20" stroke="#8a8684" strokeWidth="1.300" /></Segment>
        <Segment label="Info" className="flex-1"><circle cx="10" cy="10" r="8" stroke="#7c7775" strokeWidth="1.500" /><path d="M8 9h3l-1 5.500M10 5h2" stroke="#7c7775" strokeWidth="2" /></Segment>
        <Segment label="Results" className="flex-1"><path d="M0 4h20v3H0zM0 13h20v3H0z" stroke="#7c7775" strokeWidth="1.500" /></Segment>
        <Segment label="Graphs" className="flex-1"><path d="M1 1v18h19M3 15l5-9 5 5 5-7" stroke="#7c7775" strokeWidth="1.500" /></Segment>
        <Segment label="Layouts" className="flex-1"><path d="M1 0v7h19M2 5c5-5 8 0 17-4M1 10v9h19M5 19v-4M9 19v-6M13 19v-5M17 19v-7" stroke="#7c7775" strokeWidth="1.400" /></Segment>
      </div>
      <div className="relative ml-[51px] w-[289px] h-[18px] rounded-md border border-[#76716e] bg-[#504946] overflow-hidden">
        <select aria-label="Current sheet" className="appearance-none block w-full h-4 pl-[1px] text-[12px] leading-[14px] text-[#7d7875]">
          <option>MV: Correlation matrix</option>
        </select>
        <span className="absolute right-0 top-0 flex items-center justify-center w-[17px] h-4 bg-[#6f6b69] pointer-events-none">
          <span className="w-[9px] h-[2px] bg-[#b5b2b0]" />
        </span>
      </div>
      <button type="button" aria-label="Link" className="ml-[13px] flex items-center gap-[3px]">
        <Icon><path d="M9 11l7-7q2-1 3 0t0 3l-5 5q-2 1-3 0M11 9l-7 7q-2 1-3 0t0-3l5-5q2-1 3 0" stroke="#69635f" strokeWidth="1.700" transform="translate(0 0.500)" /></Icon>
        <Caret dim />
      </button>
      <span className="ml-[4px] w-[2px] h-[26px] bg-[#47413e]" />
      <span className="ml-[15px]"><TableArrow dim /></span>
      <p className="ml-[7px] text-[12px] leading-[15px] text-[#cbc7c5]">
        Row --, F: Power-to-weight ratio
        <br />
        Selected: Rows 1073741827, Columns 1
      </p>
    </footer>
  );
}

/* ---------- formula panel ---------- */

const variables = [
  ["A", "Vehicle"],
  ["B", "Cost in USD"],
  ["C", "Miles/Gallon (hiway)"],
  ["D", "Horsepower"],
  ["E", "Weight in pounds"],
];

const functions = [
  "ROUND(x, digits)",
  "HYPGEOMETRICF(a, b, c, x)",
  "ARCTAN2(y, x)",
  "BINOMIAL(k, n, p)",
  "SUM(x, y, ...)",
  "BINOMIAL(k, n, p)",
  "ABS(x)",
  "ARCSINH(x)",
];

function PanelSearch({ label }: { label: string }) {
  return (
    <label className="mx-[6px] mt-[10px] flex items-center h-[43px] pl-[14px] rounded-xl bg-[#373b3e] border border-b-2 border-[#45494b] border-b-[#5b5f62] text-[#f0f0f0]">
      <Magnifier className="size-7" />
      <input aria-label={label} placeholder={label} className="ml-[16px] w-full outline-none placeholder:text-[#6f7274]" />
    </label>
  );
}

function FormulaPanel() {
  return (
    <section className="w-[586px] shrink-0 rounded-[24px] bg-[#2d3134] pl-[24px] pr-[25px] pt-[26px] pb-[25px] text-[28px] text-[#ececec]">
      <h1 className="leading-[36px] font-bold text-[29px] text-[#e6e6e6]">Calculated variable: Variable F</h1>
      <label htmlFor="name" className="block mt-[30px] leading-[36px]">Variable name</label>
      <div className="mt-[8px] mx-[2px]">
        <input
          id="name"
          defaultValue="Power-to-weight ratio"
          className="block w-full h-[41px] pt-[2px] pl-[6px] bg-[#373b3e] border border-b-2 border-[#45494b] border-b-[#6d7173] text-white font-medium outline-none"
        />
      </div>
      <div className="flex items-center gap-[10px] mt-[34px] h-[36px]">
        <span id="formula">Formula</span>
        <svg className="size-[22px]" viewBox="0 0 22 22" fill="none" aria-hidden="true">
          <circle cx="11" cy="11" r="11" fill="#dedede" />
          <path d="M8 9.500h3.500V16M8 16.200h7M9.500 5.500h3" stroke="#2d3134" strokeWidth="2.600" />
        </svg>
      </div>
      <div className="flex items-center mt-[8px] ml-[2px] h-[39px]">
        <div className="flex items-center w-[436px] h-[39px] pl-[8px] bg-[#373b3e] border border-b-2 border-[#45494b] border-b-[#6d7173] text-[26px]">
          <span className="flex items-center w-[73px] font-['Liberation_Serif',serif] text-[28px] leading-[34px] text-[#dcdcdc] whitespace-nowrap">
            <i className="pr-[5px] text-[31px]">f</i>(x)=
          </span>
          <span
            role="textbox"
            aria-labelledby="formula"
            contentEditable
            suppressContentEditableWarning
            className="font-['Liberation_Sans',sans-serif] leading-[34px] text-white outline-none whitespace-nowrap"
          >
            ROUND(<span className="text-[#5b62f0]">D</span>/<span className="text-[#f25b5b]">E</span>, 2)
          </span>
        </div>
        <button type="button" aria-label="Cancel" className="ml-[18px]">
          <svg className="size-[38px]" viewBox="0 0 38 38" fill="none" stroke="#f66f55" aria-hidden="true">
            <circle cx="19" cy="19" r="17.500" strokeWidth="2.400" />
            <path d="M12.500 12.500l13 13M25.500 12.500l-13 13" strokeWidth="2.200" strokeLinecap="round" />
          </svg>
        </button>
        <button type="button" aria-label="Apply" className="ml-[6px]">
          <svg className="size-[38px]" viewBox="0 0 38 38" fill="none" stroke="#7bd79a" aria-hidden="true">
            <circle cx="19" cy="19" r="17.500" strokeWidth="2.400" />
            <path d="M12 19.500l5 4.500 9.500-9.500" strokeWidth="2.200" strokeLinecap="round" />
          </svg>
        </button>
      </div>

      <h2 className="mt-[34px] leading-[36px]">Available variables</h2>
      <PanelSearch label="Search variables" />
      <ul className="mt-[19px] grid grid-rows-5 h-[224px] border border-[#3b3b3b] border-b-2 border-b-[#4d4d4d]">
        {variables.map(([letter, name], i) => (
          <li key={letter} className="flex items-center pl-[8px] bg-[#1e1e1e] even:bg-[#292929] border-b border-[#3b3b3b] last:border-b-0">
            {i === 0 ? <Tag className="size-[26px] mr-[3px] text-[#fb8a67]" /> : <Curve className="w-[29px] h-[26px] text-[#f88761]" />}
            <span className="w-[46px] pl-[9px] text-[26px] font-medium">{letter}</span>
            <span className="text-[#838383]">{name}</span>
          </li>
        ))}
      </ul>

      <h2 className="mt-[31px] leading-[36px]">Available functions</h2>
      <PanelSearch label="Search functions" />
      <div className="mt-[20px] h-[382px] overflow-hidden border border-[#3b3b3b]">
        <h3 className="h-[41px] pl-[12px] text-[22px] leading-[41px] bg-[#1e1e1e] text-[#9c9c9c]">Recent</h3>
        <ul>
          {functions.map((f, i) => (
            <li
              key={i}
              className={`h-[45px] pl-[7px] leading-[44px] font-medium ${i === 0 ? "bg-[#0058d0] text-white" : "odd:bg-[#1e1e1e] even:bg-[#292929] border-b border-[#3b3b3b]"}`}
            >
              {f}
            </li>
          ))}
        </ul>
      </div>
    </section>
  );
}

export default function App() {
  return (
    <div className="min-h-screen bg-white flex items-start pl-[393px] pr-[429px] pt-[126px] font-[Inter,sans-serif]">
      <main className="flex-1 min-w-0 mt-[179px] flex flex-col rounded-l-[14px] overflow-hidden bg-[#2e3235] border-t-2 border-[#5d6467]">
        <header className="flex items-center h-[22px] pt-[6px] pl-[9px] gap-[9px]">
          <span className="size-[14px] rounded-full bg-[#d5504a]" />
          <span className="size-[14px] rounded-full bg-[#d59f2a]" />
          <span className="size-[14px] rounded-full bg-[#22a833]" />
          <svg className="ml-[592px] w-[12px] h-4" viewBox="0 0 12 16" aria-hidden="true">
            <path d="M0 0h8l4 4v12H0z" fill="#4a2494" /><path d="M8 0v4h4" fill="#d9d9e6" />
            <path d="M6 5l4 6H2z" fill="#49a6e0" /><path d="M6 5l2 3H4z" fill="#e07a5b" /><path d="M3 13.500h6" stroke="#a48ad0" />
          </svg>
          <h1 className="text-[15px] leading-4 font-semibold text-[#b1b3b4]">Correlation</h1>
        </header>
        <Toolbar />
        <div className="flex overflow-hidden bg-[#23282b]">
          <Sidebar />
          <span className="w-px shrink-0 bg-[#4a4a4a]" />
          <DataGrid />
        </div>
        <StatusBar />
      </main>
      <FormulaPanel />
    </div>
  );
}
